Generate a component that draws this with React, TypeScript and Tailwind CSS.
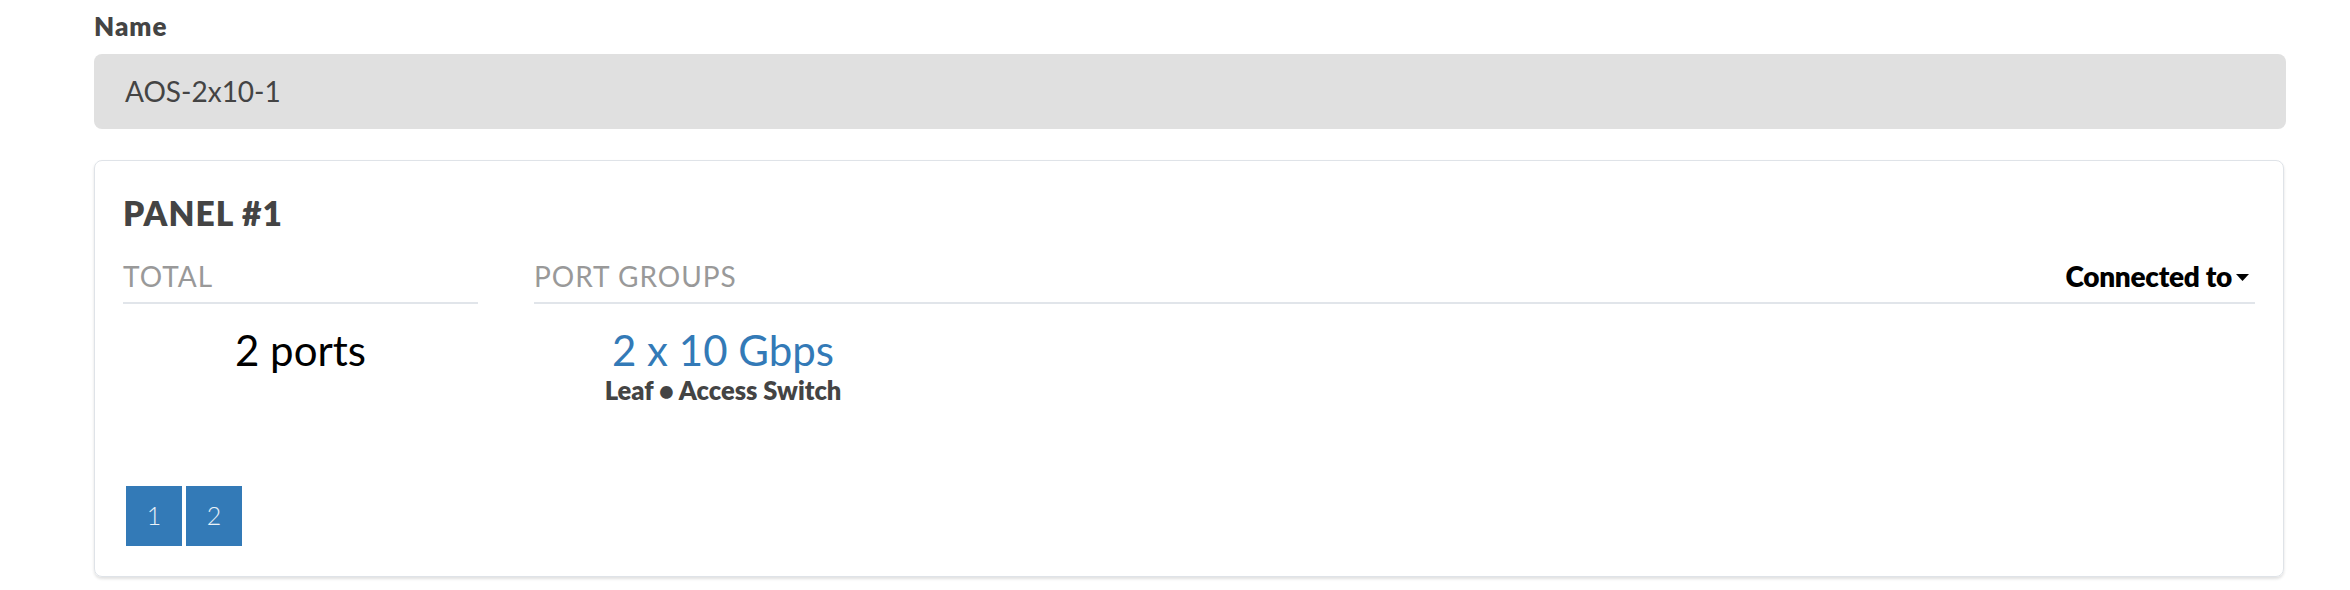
import React from 'react';

const Caret: React.FC = () => (
  <svg width="13" height="7" viewBox="0 0 13 7" className="ml-[4px] mt-[2px]">
    <path d="M0 0 L13 0 L6.5 7 Z" fill="#000" />
  </svg>
);

const PageButton: React.FC<{ label: string }> = ({ label }) => (
  <button className="flex h-[60px] w-[56px] items-center justify-center bg-[#337ab7] text-[25px] font-light leading-none text-white/90">
    {label}
  </button>
);

export default function App() {
  return (
    <div className="min-h-screen bg-white pl-[94px] pr-[64px] pt-[12px] font-['Lato',sans-serif]">
      <label className="block text-[26px] font-extrabold leading-[1.15] tracking-[1px] text-[#444]">Name</label>
      <div className="mt-[12px] flex h-[75px] items-center rounded-[8px] bg-[#e0e0e0] px-[31px] text-[28px] leading-[1.2] text-[#444]">
        AOS-2x10-1
      </div>

      <div className="mr-[2px] mt-[31px] rounded-[8px] border border-[#dfe3e8] px-[28px] pb-[30px] pt-[32px] shadow-[0_2px_3px_rgba(0,0,0,0.12)]">
        <h2 className="text-[33.5px] font-extrabold leading-[1.2] tracking-[1px] text-[#444]">PANEL #1</h2>

        <div className="mt-[27px] flex gap-[56px]">
          <div className="w-[355px]">
            <div className="border-b-2 border-[#e1e5ea] pb-[8px] text-[28px] leading-[1.2] tracking-[1px] text-[#999]">TOTAL</div>
            <div className="pt-[21px] text-center text-[42px] leading-[1.2] text-black">2 ports</div>
          </div>

          <div className="flex-1">
            <div className="flex items-end justify-between border-b-2 border-[#e1e5ea] pb-[8px]">
              <span className="text-[28px] leading-[1.2] tracking-[1px] text-[#999]">PORT GROUPS</span>
              <button className="mr-[6px] flex items-center text-[28px] font-extrabold leading-[1.2] tracking-[-0.3px] text-black">
                Connected to
                <Caret />
              </button>
            </div>
            <div className="w-[378px] pt-[21px] text-center">
              <div className="text-[42px] leading-[1.2] text-[#337ab7]">2 x 10 Gbps</div>
              <div className="text-[25.5px] font-extrabold leading-[1.2] text-[#444]">Leaf • Access Switch</div>
            </div>
          </div>
        </div>

        <div className="ml-[3px] mt-[80px] flex gap-[4px]">
          <PageButton label="1" />
          <PageButton label="2" />
        </div>
      </div>
    </div>
  );
}
